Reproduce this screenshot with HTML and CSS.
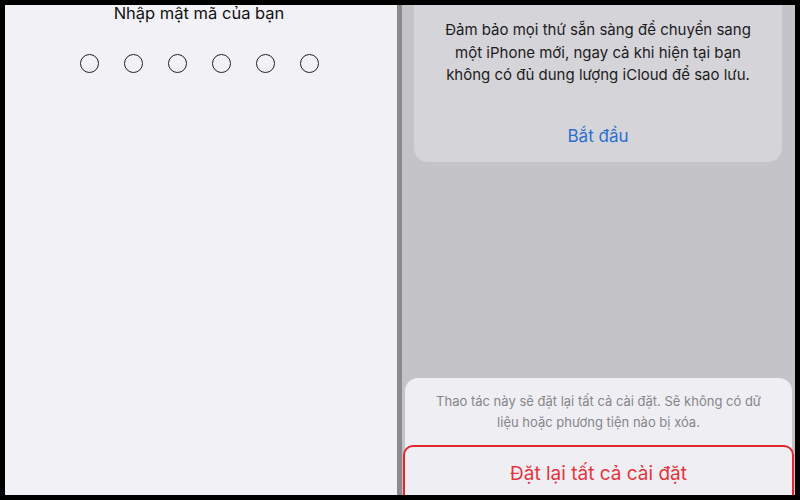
FILE: index.html
```html
<!DOCTYPE html>
<html>
<head>
	<meta charset="utf-8">
	<title>Đặt lại tất cả cài đặt</title>
	<link rel="stylesheet" href="styles.css">
</head>
<body>
	<div class="frame">
		<div class="passcode">
			<div class="passcode-title">Nhập mật mã của bạn</div>
			<div class="dots">
				<span class="dot"></span>
				<span class="dot"></span>
				<span class="dot"></span>
				<span class="dot"></span>
				<span class="dot"></span>
				<span class="dot"></span>
			</div>
		</div>

		<div class="divider"></div>

		<div class="settings">
			<div class="card">
				<p class="card-text">Đảm bảo mọi thứ sẵn sàng để chuyển sang một iPhone mới, ngay cả khi hiện tại bạn không có đủ dung lượng iCloud để sao lưu.</p>
				<div class="card-link">Bắt đầu</div>
			</div>

			<div class="sheet">
				<p class="sheet-text">Thao tác này sẽ đặt lại tất cả cài đặt. Sẽ không có dữ liệu hoặc phương tiện nào bị xóa.</p>
				<div class="sheet-button">Đặt lại tất cả cài đặt</div>
			</div>
		</div>
	</div>
</body>
</html>
```

FILE: styles.css
```css
html, body {
	margin: 0;
	height: 100%;
	background: #000;
}

body {
	font-family: Inter, "Noto Sans", sans-serif;
	overflow: hidden;
}

.frame {
	display: flex;
	height: 490px;
	margin: 5px 5px 0 5px;
	overflow: hidden;
}

/* left side - passcode */
.passcode {
	width: 392px;
	background: #f2f1f6;
	text-align: center;
	padding-right: 4px;
	box-sizing: border-box;
}

.passcode-title {
	font-size: 16.5px;
	line-height: 17px;
	color: #111;
}

.dots {
	display: flex;
	justify-content: center;
	gap: 25px;
	margin-top: 32px;
}

.dot {
	width: 17px;
	height: 17px;
	border: 1.5px solid #222;
	border-radius: 50%;
}

.divider {
	width: 5px;
	background: #8b8b8c;
}

/* right side - settings */
.settings {
	flex: 1;
	background: #c4c3c8;
	display: flex;
	flex-direction: column;
	justify-content: space-between;
}

.card {
	margin: 0 13px 0 12px;
	background: #d5d4d9;
	border-radius: 0 0 14px 14px;
	text-align: center;
	height: 157px;
	padding-top: 14px;
	box-sizing: border-box;
}

.card-text {
	margin: 0 auto;
	width: 330px;
	font-size: 15px;
	line-height: 22.5px;
	color: #1c1c1e;
}

.card-link {
	margin-top: 39px;
	font-size: 17px;
	color: #2c6fd1;
}

.sheet {
	margin: 0 3px;
	height: 117px;
	background: #efeef3;
	border-radius: 13px 13px 0 0;
	text-align: center;
	padding-top: 13px;
	box-sizing: border-box;
}

.sheet-text {
	margin: 0 auto;
	width: 350px;
	font-size: 13px;
	line-height: 21px;
	color: #86868a;
}

.sheet-button {
	margin: 12px -2px 0 -2px;
	height: 60px;
	border: 2px solid #e0262f;
	border-radius: 10px;
	padding-top: 15px;
	box-sizing: border-box;
	font-size: 19px;
	color: #e2353d;
}
```
